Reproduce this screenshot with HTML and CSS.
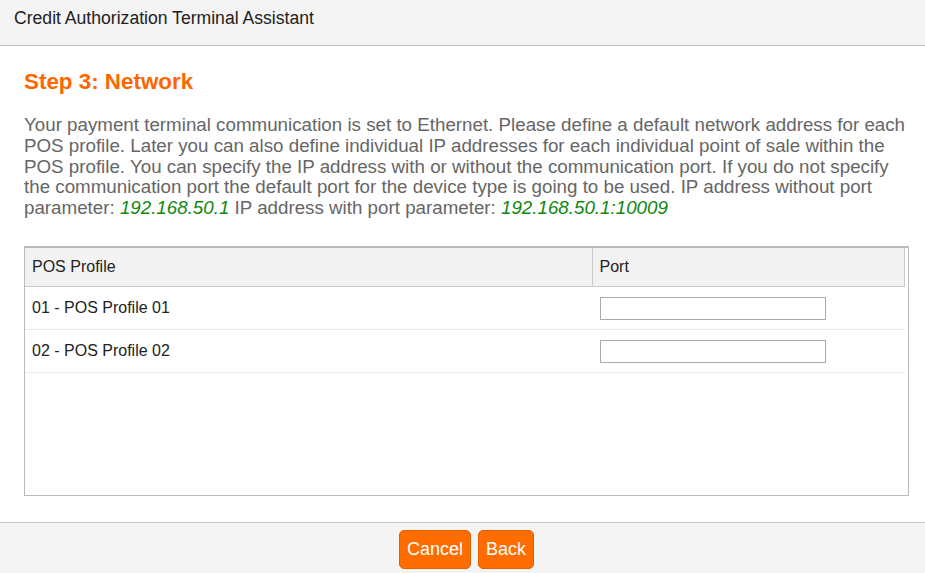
FILE: index.html
```html
<!DOCTYPE html>
<html>
<head>
<meta charset="utf-8">
<link rel="stylesheet" href="styles.css">
</head>
<body>
<div class="app">
  <header class="topbar">Credit Authorization Terminal Assistant</header>
  <main class="content">
    <h1 class="step-title">Step 3: Network</h1>
    <p class="intro">Your payment terminal communication is set to Ethernet. Please define a default network address for each POS profile. Later you can also define individual IP addresses for each individual point of sale within the POS profile. You can specify the IP address with or without the communication port. If you do not specify the communication port the default port for the device type is going to be used. IP address without port parameter: <em class="ip">192.168.50.1</em> IP address with port parameter: <em class="ip">192.168.50.1:10009</em></p>
    <div class="grid-box">
      <table class="grid">
        <thead>
          <tr><th class="col-profile">POS Profile</th><th class="col-port">Port</th></tr>
        </thead>
        <tbody>
          <tr><td>01 - POS Profile 01</td><td><input class="port-input" type="text"></td></tr>
          <tr><td>02 - POS Profile 02</td><td><input class="port-input" type="text"></td></tr>
        </tbody>
      </table>
    </div>
  </main>
  <footer class="footer">
    <button class="btn">Cancel</button>
    <button class="btn">Back</button>
  </footer>
</div>
</body>
</html>
```
FILE: styles.css
```css
* { box-sizing: border-box; }
html, body { margin: 0; padding: 0; }
body {
  font-family: "Liberation Sans", Arial, sans-serif;
  background: #fff;
  color: #222;
}
.app {
  display: flex;
  flex-direction: column;
  height: 573px;
}
.topbar {
  height: 46px;
  background: #f4f4f4;
  border-bottom: 1px solid #c4c4c4;
  font-size: 17.6px;
  line-height: 20px;
  padding: 8px 14px 0;
  color: #222;
}
.content {
  flex: 1;
  padding: 0 16px 0 24px;
}
.step-title {
  margin: 23px 0 0;
  font-size: 22.4px;
  line-height: 26px;
  font-weight: bold;
  color: #ff6600;
}
.intro {
  margin: 20px 0 0;
  font-size: 18.75px;
  line-height: 20.75px;
  color: #666;
}
.ip {
  color: #118811;
  font-style: italic;
}
.grid-box {
  margin-top: 27px;
  width: 885px;
  height: 250px;
  border: 1px solid #bbb;
  border-top: 2px solid #bbb;
}
.grid {
  width: 880px;
  border-collapse: collapse;
  font-size: 16px;
  color: #222;
}
.grid th {
  text-align: left;
  font-weight: normal;
  background: #f2f2f2;
  height: 39px;
  padding: 0 7px;
  border-bottom: 1px solid #c8c8c8;
}
.col-profile { width: 567px; border-right: 1px solid #c8c8c8; }
.col-port { border-right: 1px solid #c8c8c8; }
.grid td {
  height: 43px;
  padding: 0 7px;
  border-bottom: 1px solid #eaeaea;
}
.port-input {
  display: block;
  width: 226px;
  height: 23px;
  border: 1px solid #aaa;
  margin: 0 0 0 1px;
  padding: 0 4px;
  background: #fff;
}
.footer {
  height: 51px;
  background: #f4f4f4;
  border-top: 1px solid #c8c8c8;
  display: flex;
  justify-content: center;
  gap: 7px;
  padding: 7px 0 0 8px;
}
.btn {
  height: 39px;
  padding: 0 7px;
  background: #ff6d00;
  border: 1px solid #e06000;
  border-radius: 5px;
  color: #fff;
  font-family: "Liberation Sans", Arial, sans-serif;
  font-size: 18px;
}
```
